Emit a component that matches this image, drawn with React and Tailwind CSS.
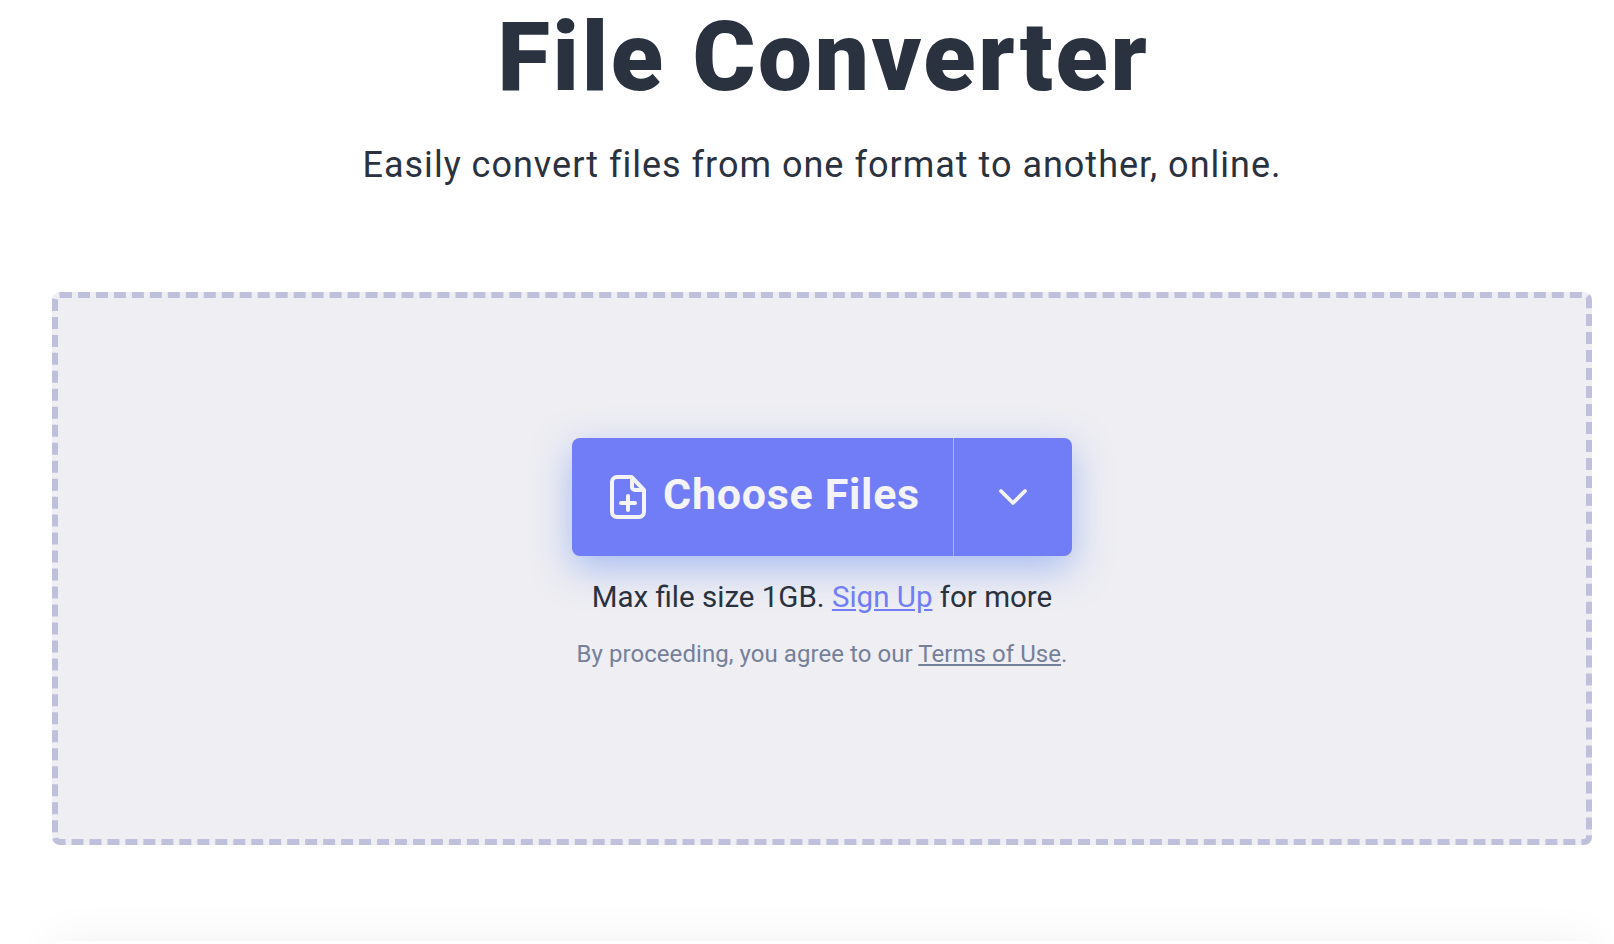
import { ChevronDown } from 'lucide-react';

const FileIcon = () => (
  <svg width="36" height="44" viewBox="0 0 36 44" fill="none" stroke="currentColor" strokeWidth="4" strokeLinejoin="round" strokeLinecap="round">
    <path d="M7 2h14.5L34 15v22a5 5 0 0 1-5 5H7a5 5 0 0 1-5-5V7a5 5 0 0 1 5-5z" />
    <path d="M22 3v9a3 3 0 0 0 3 3h8" />
    <path d="M18 21v14M11 28h14" />
  </svg>
);

const App = () => {
  return (
    <div className="h-[944px] overflow-hidden bg-white font-['Roboto',sans-serif] text-[#2a3240]">
      <div className="pl-[52px] pr-[22px]">
        <h1 className="pl-[3px] text-center text-[96px] leading-[114px] font-black tracking-[2.7px]">File Converter</h1>
        <p className="mt-[27px] text-center text-[36px] leading-[48px] tracking-[1px]">Easily convert files from one format to another, online.</p>
        <div className="mt-[103px] flex h-[553px] flex-col items-center rounded-[8px] border-[6px] border-dashed border-[#bfc0dc] bg-[#eeeef3] pt-[140px]">
          <div className="flex h-[118px] w-[500px] rounded-[8px] bg-[#717df6] text-[#f3f3f8] shadow-[0_12px_36px_rgba(100,140,240,0.5)]">
            <div className="flex flex-1 items-center justify-center gap-[17px] border-r border-[#a9b4f0] pl-[5px]">
              <FileIcon />
              <span className="pb-[6px] text-[43px] font-bold tracking-[0.7px]">Choose Files</span>
            </div>
            <div className="flex w-[118px] items-center justify-center">
              <ChevronDown size={48} strokeWidth={1.9} />
            </div>
          </div>
          <p className="mt-[21px] text-[29.5px] leading-[40px]">Max file size 1GB. <a className="text-[#717df6] underline">Sign Up</a> for more</p>
          <p className="mt-[21px] text-[24px] leading-[32px] tracking-[0.06px] text-[#75809a]">By proceeding, you agree to our <a className="underline">Terms of Use</a>.</p>
        </div>
        <div className="mt-[96px] h-[100px] rounded-t-[8px] bg-white shadow-[0_0_48px_rgba(0,0,0,0.06)]"></div>
      </div>
    </div>
  );
};

export default App;
